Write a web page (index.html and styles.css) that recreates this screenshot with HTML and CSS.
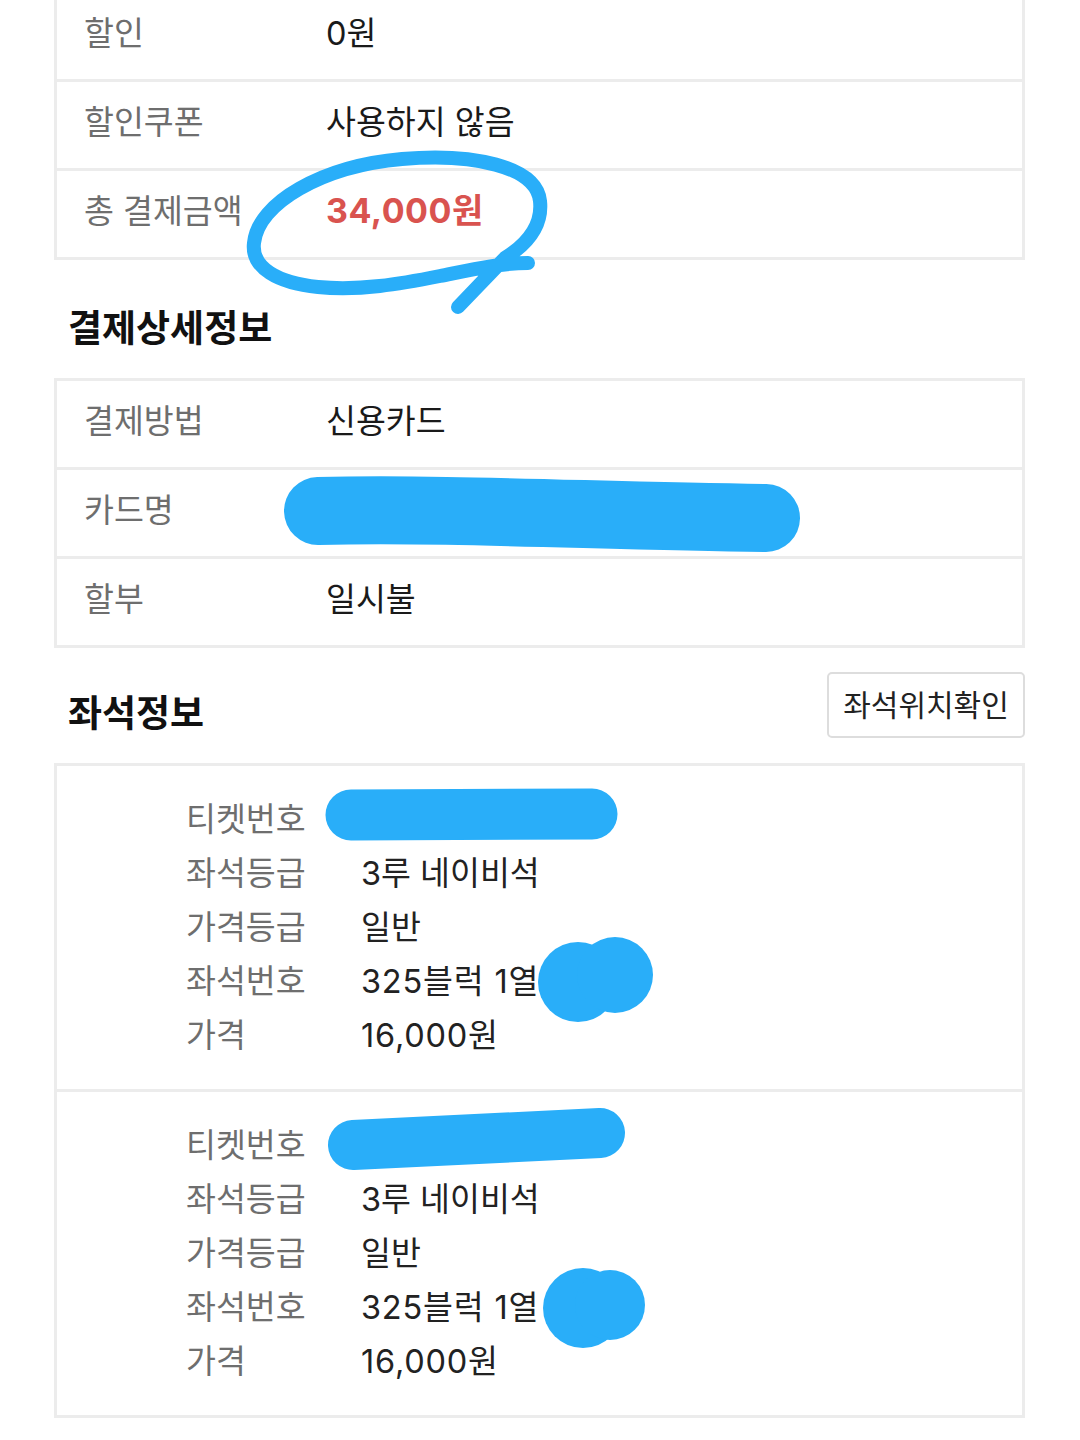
FILE: index.html
```html
<!DOCTYPE html>
<html lang="ko">
<head>
<meta charset="utf-8">
<title>결제정보</title>
<link rel="stylesheet" href="styles.css">
</head>
<body>
<div class="page">
  <div class="table table-top">
    <div class="row"><div class="label">할인</div><div class="value">0원</div></div>
    <div class="row"><div class="label">할인쿠폰</div><div class="value">사용하지 않음</div></div>
    <div class="row"><div class="label">총 결제금액</div><div class="value total">34,000원</div></div>
  </div>

  <h2 class="section-title">결제상세정보</h2>

  <div class="table">
    <div class="row"><div class="label">결제방법</div><div class="value">신용카드</div></div>
    <div class="row"><div class="label">카드명</div><div class="value"></div></div>
    <div class="row"><div class="label">할부</div><div class="value">일시불</div></div>
  </div>

  <div class="section-head">
    <h2 class="section-title-inline">좌석정보</h2>
    <button class="seat-btn" type="button">좌석위치확인</button>
  </div>

  <div class="table seats">
    <div class="ticket">
      <div class="line"><span class="k">티켓번호</span><span class="v"></span></div>
      <div class="line"><span class="k">좌석등급</span><span class="v">3루 네이비석</span></div>
      <div class="line"><span class="k">가격등급</span><span class="v">일반</span></div>
      <div class="line"><span class="k">좌석번호</span><span class="v num">325블럭 1열</span></div>
      <div class="line"><span class="k">가격</span><span class="v num">16,000원</span></div>
    </div>
    <div class="ticket">
      <div class="line"><span class="k">티켓번호</span><span class="v"></span></div>
      <div class="line"><span class="k">좌석등급</span><span class="v">3루 네이비석</span></div>
      <div class="line"><span class="k">가격등급</span><span class="v">일반</span></div>
      <div class="line"><span class="k">좌석번호</span><span class="v num">325블럭 1열</span></div>
      <div class="line"><span class="k">가격</span><span class="v num">16,000원</span></div>
    </div>
  </div>

  <svg class="scribbles" width="1080" height="1440" viewBox="0 0 1080 1440" aria-hidden="true">
    <g fill="none" stroke="#29aef9" stroke-linecap="round" stroke-linejoin="round">
      <path stroke-width="14" d="M 528 263 C 500 263 470 270 440 276 C 400 284 360 291 318 287 C 278 283 251 268 254 243 C 258 203 322 166 402 159 C 472 153 536 166 540 201 C 543 228 524 246 505 258 L 458 307"/>
      <path stroke-width="68" d="M 318 511 C 450 508 600 516 766 518"/>
      <path stroke-width="51" d="M 351 815 L 592 814"/>
      <path stroke-width="50" d="M 353 1145 L 600 1133"/>
    </g>
    <g fill="#29aef9">
      <circle cx="578" cy="982" r="40"/>
      <circle cx="615" cy="975" r="38"/>
      <circle cx="583" cy="1308" r="40"/>
      <circle cx="610" cy="1305" r="35"/>
    </g>
  </svg>
</div>
</body>
</html>
```

FILE: styles.css
```css
html, body {
  margin: 0;
  padding: 0;
  background: #ffffff;
}

body {
  font-family: Inter, "Noto Sans CJK KR", sans-serif;
  color: #1c1c1c;
}

.page {
  position: relative;
  height: 1440px;
  overflow: hidden;
  padding: 0 55px 0 54px;
  box-sizing: border-box;
}

.table {
  border: 3px solid #ececec;
}

.table-top {
  margin-top: -10px;
}

.row {
  display: grid;
  grid-template-columns: 242px 1fr;
  align-items: center;
  height: 74px;
  padding: 0 0 12px 27px;
  border-bottom: 3px solid #ececec;
  font-size: 32.5px;
}

.row:last-child {
  border-bottom: 0;
}

.label {
  color: #6e6e6e;
}

.value {
  color: #1a1a1a;
}

.total {
  color: #d9534f;
  font-weight: 700;
  font-size: 34px;
  letter-spacing: 0.5px;
}

.section-title {
  margin: 0;
  padding: 44px 0 24px 14px;
  font-size: 37px;
  line-height: 50px;
  font-weight: 700;
  color: #111111;
}

.section-head {
  display: flex;
  justify-content: space-between;
  align-items: flex-start;
  padding: 24px 0 24px 0;
}

.section-title-inline {
  margin: 17px 0 0 14px;
  font-size: 37px;
  line-height: 50px;
  font-weight: 700;
  color: #111111;
}

.seat-btn {
  width: 198px;
  height: 66px;
  border: 2px solid #dddddd;
  border-radius: 5px;
  background: #ffffff;
  font-family: Inter, "Noto Sans CJK KR", sans-serif;
  font-size: 30px;
  color: #222222;
  padding: 0 0 4px 0;
}

.ticket {
  padding: 23px 0 30px 129px;
  border-bottom: 3px solid #ececec;
}

.ticket:last-child {
  border-bottom: 0;
}

.line {
  display: grid;
  grid-template-columns: 175px 1fr;
  align-items: center;
  height: 54px;
  font-size: 32.5px;
}

.k {
  color: #6e6e6e;
}

.v {
  color: #222222;
}

.num {
  letter-spacing: 0.8px;
}

.scribbles {
  position: absolute;
  top: 0;
  left: 0;
  pointer-events: none;
}
```
